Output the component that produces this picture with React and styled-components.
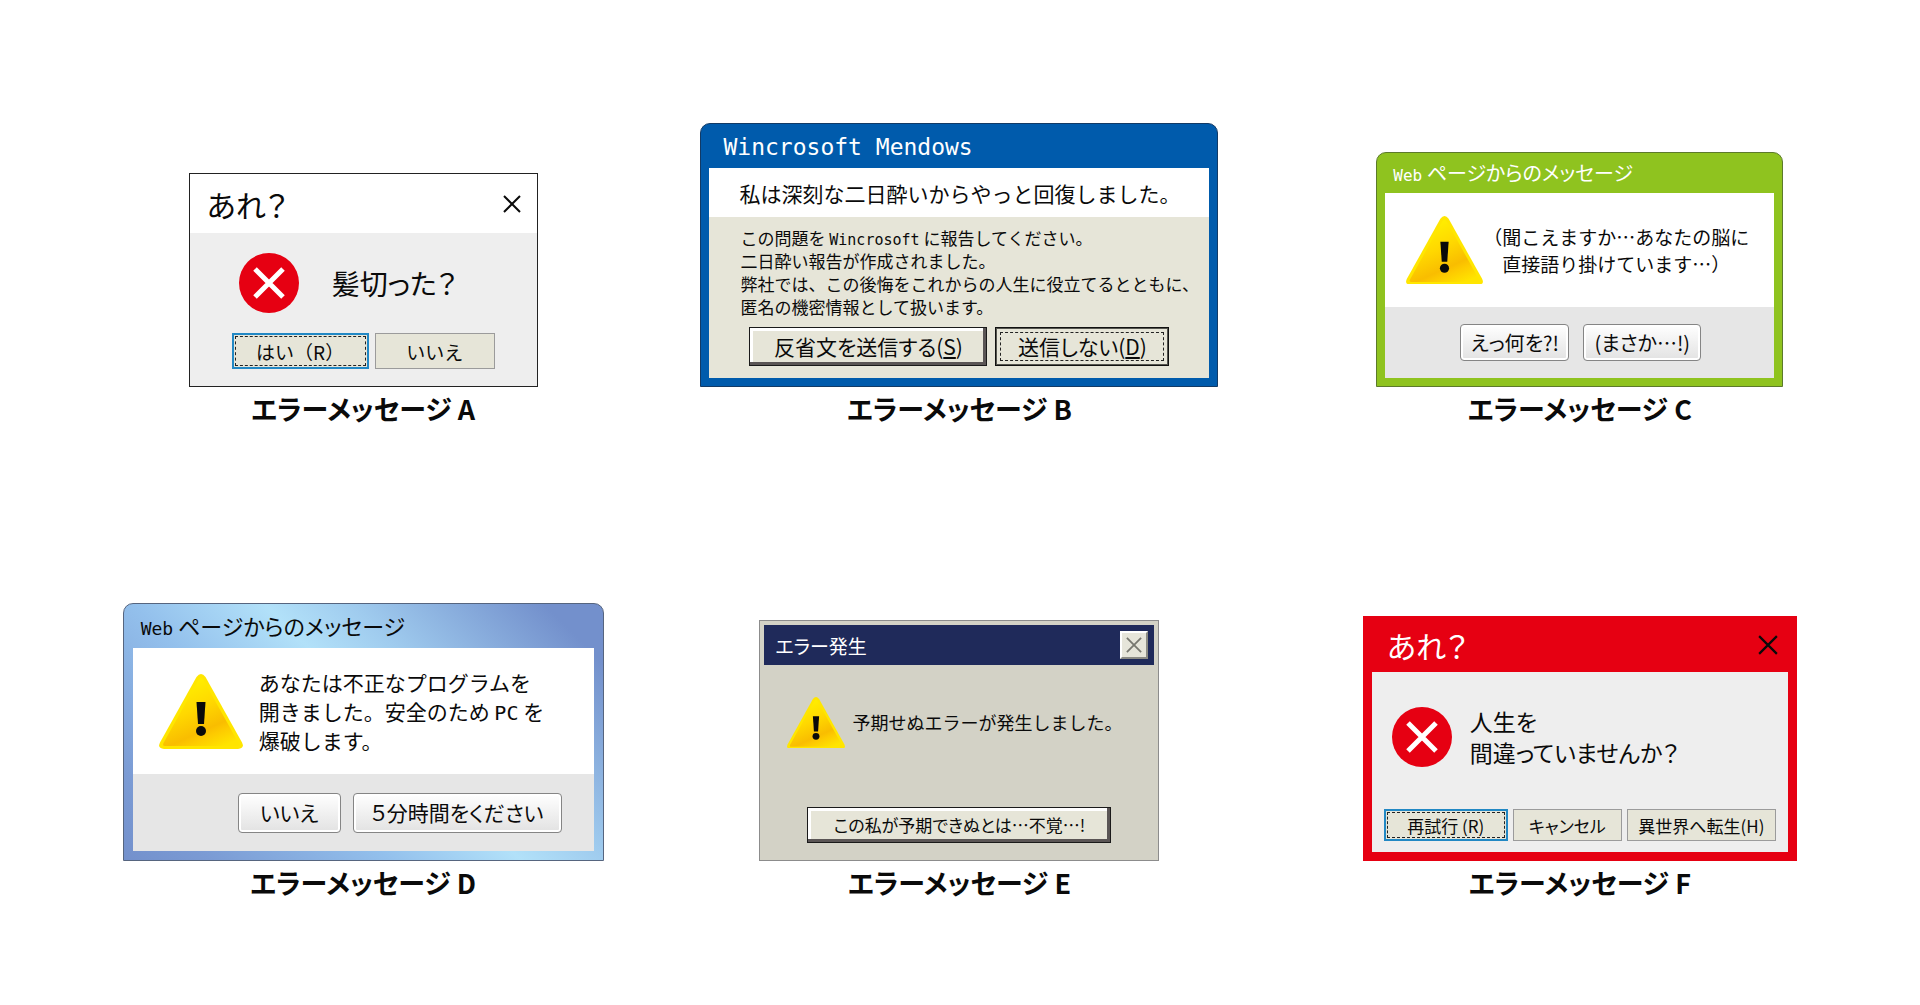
import React from "react";
import styled, { createGlobalStyle, css } from "styled-components";

const GlobalStyle = createGlobalStyle`
  *, *::before, *::after { box-sizing: border-box; }
  body { margin: 0; background: #fff; color: #0a0a0a; }
  body, button { font-family: "Noto Sans CJK JP", sans-serif; }
`;

const proportional = css`
  font-feature-settings: "palt";
`;

const Gallery = styled.main`
  display: grid;
  grid-template-columns: 149fr 149fr 161fr;
  align-items: end;
  justify-items: center;
  row-gap: 172px;
  padding: 123px 18px 0 65px;
`;

const Figure = styled.figure`
  margin: 0;
  display: flex;
  flex-direction: column;
  align-items: center;
`;

const Caption = styled.figcaption`
  font-size: 27px;
  font-weight: 700;
  line-height: 44px;
  ${proportional}
`;

const Dialog = styled.section`
  width: ${(p) => p.$width}px;
  border: 1px solid ${(p) => p.$edge};
  border-radius: ${(p) => (p.$round ? "10px 10px 0 0" : "0")};
  background: ${(p) => p.$frame};
  padding: 0 ${(p) => p.$rim ?? 0}px ${(p) => p.$rim ?? 0}px;
`;

const TitleBar = styled.header`
  display: flex;
  align-items: center;
  justify-content: space-between;
  height: ${(p) => p.$height}px;
  padding: 0 ${(p) => p.$padRight ?? 16}px 0 ${(p) => p.$padLeft}px;
  background: ${(p) => p.$bg ?? "transparent"};
  color: ${(p) => p.$color ?? "inherit"};
`;

const Title = styled.h2`
  margin: 0;
  font-size: ${(p) => p.$size}px;
  font-weight: 400;
  line-height: 1;
  ${proportional}
`;

const Mono = styled.span`
  font-family: "DejaVu Sans Mono", monospace;
  font-size: ${(p) => p.$size}px;
  line-height: 1;
`;

const CloseButton = styled.button`
  display: flex;
  padding: 0;
  border: 0;
  background: none;
  color: #0a0a0a;
`;

const BevelClose = styled(CloseButton)`
  width: 28px;
  height: 28px;
  align-items: center;
  justify-content: center;
  background: #e6e5da;
  border: 2px solid;
  border-color: #fff #8b8b84 #8b8b84 #fff;
  color: #77776f;
`;

const Panel = styled.div`
  height: ${(p) => p.$height}px;
  background: ${(p) => p.$bg ?? "transparent"};
  display: flex;
  align-items: center;
  gap: ${(p) => p.$gap ?? 0}px;
  padding: ${(p) => p.$pad ?? "0"};
`;

const Stack = styled.div`
  background: ${(p) => p.$bg};
  padding: ${(p) => p.$pad ?? "0"};
`;

const Message = styled.p`
  margin: 0;
  font-size: ${(p) => p.$size}px;
  line-height: ${(p) => p.$line}px;
  white-space: nowrap;
  ${(p) => p.$tight && proportional}
`;

const Indent = styled.span`
  padding-left: 1em;
`;

const Actions = styled.div`
  display: flex;
  align-items: center;
  justify-content: ${(p) => p.$justify ?? "flex-start"};
  gap: ${(p) => p.$gap}px;
  height: ${(p) => p.$height}px;
  padding: ${(p) => p.$pad ?? "0"};
  background: ${(p) => p.$bg ?? "transparent"};
`;

const BaseButton = styled.button`
  display: flex;
  align-items: center;
  justify-content: center;
  width: ${(p) => p.$width}px;
  height: ${(p) => p.$height}px;
  padding: 0;
  font-size: ${(p) => p.$size}px;
  line-height: 1;
  white-space: nowrap;
  color: #0a0a0a;
  ${(p) => !p.$loose && proportional}
`;

const FlatButton = styled(BaseButton)`
  background: #e6e5d8;
  border: 1px solid #9b9b9b;
  ${(p) =>
    p.$focused &&
    css`
      border: 2px solid #2288c4;
      outline: 1px dashed #222;
      outline-offset: -4px;
    `}
`;

const BevelButton = styled(BaseButton)`
  background: #e6e5d8;
  border: 1px solid #1a1a1a;
  box-shadow: inset -3px -3px 0 #5a5555, inset 3px 3px 0 #fff;
`;

const PressedButton = styled(BaseButton)`
  background: #e6e5d8;
  border: 1px solid #111;
  box-shadow: inset 0 0 0 1px #55554f;
  outline: 1px dashed #222;
  outline-offset: -6px;
`;

const GlossButton = styled(BaseButton)`
  border: 1px solid #858585;
  border-radius: 4px;
  background: linear-gradient(#fff, #e2e2e2);
  box-shadow: inset 0 0 0 2px #fff;
`;

function WarningIcon({ width, id }) {
  return (
    <svg width={width} viewBox="0 0 84 75" role="img" aria-label="警告">
      <defs>
        <linearGradient id={id} x1="0.35" y1="0.1" x2="0.8" y2="1">
          <stop offset="0" stopColor="#ffec00" />
          <stop offset="0.35" stopColor="#ffd800" />
          <stop offset="0.68" stopColor="#f9bd00" />
          <stop offset="0.78" stopColor="#fdca00" />
          <stop offset="1" stopColor="#ffe400" />
        </linearGradient>
      </defs>
      <path
        d="M37.500 3Q42-3 46.500 3L83 68.500Q86 74.500 79 75H5Q-2 74.500 1 68.500Z"
        fill="#ffe600"
      />
      <path d="M39.500 6Q42 2 44.500 6L79.500 69Q81 72 78 72H6Q3 72 4.500 69Z" fill={`url(#${id})`} />
      <path d="M37.500 28H46.500L45 50H39Z" fill="#0a0a0a" />
      <circle cx="42" cy="57" r="5" fill="#0a0a0a" />
    </svg>
  );
}

function ErrorIcon() {
  return (
    <svg width="60" height="60" viewBox="0 0 60 60" role="img" aria-label="エラー">
      <circle cx="30" cy="30" r="30" fill="#e60012" />
      <path d="M16 16L44 44M44 16L16 44" stroke="#fff" strokeWidth="5" />
    </svg>
  );
}

function CrossIcon({ size, weight }) {
  return (
    <svg width={size} height={size} viewBox="0 0 18 18" aria-hidden="true">
      <path d="M1 1L17 17M17 1L1 17" stroke="currentColor" strokeWidth={weight} />
    </svg>
  );
}

function DialogA() {
  return (
    <Dialog $width={349} $edge="#222" $frame="#eee">
      <TitleBar $height={59} $padLeft={17} $bg="#fff">
        <Title $size={30}>あれ？</Title>
        <CloseButton aria-label="閉じる">
          <CrossIcon size={18} weight={2} />
        </CloseButton>
      </TitleBar>
      <Panel $height={100} $pad="0 0 0 49px" $gap={33}>
        <ErrorIcon />
        <Message $size={28} $line={32} $tight>髪切った？</Message>
      </Panel>
      <Actions $height={53} $gap={6} $pad="0 0 17px 42px">
        <FlatButton $width={137} $height={36} $size={19} $focused $loose>はい（R）</FlatButton>
        <FlatButton $width={120} $height={36} $size={19} $loose>いいえ</FlatButton>
      </Actions>
    </Dialog>
  );
}

function DialogB() {
  return (
    <Dialog $width={518} $edge="#123a66" $frame="#005bac" $rim={8} $round>
      <TitleBar $height={44} $padLeft={14} $color="#fff">
        <Title $size={23}>
          <Mono $size={23}>Wincrosoft Mendows</Mono>
        </Title>
      </TitleBar>
      <Panel $height={49} $bg="#fff" $pad="0 0 0 30px">
        <Message $size={21} $line={32}>私は深刻な二日酔いからやっと回復しました。</Message>
      </Panel>
      <Stack $bg="#e6e5d8" $pad="9px 0 0 31px">
        <Message $size={17} $line={23}>
          この問題を <Mono $size={15}>Wincrosoft</Mono> に報告してください。<br />
          二日酔い報告が作成されました。<br />
          弊社では、この後悔をこれからの人生に役立てるとともに、<br />
          匿名の機密情報として扱います。
        </Message>
        <Actions $height={60} $gap={8} $pad="0 0 4px 9px">
          <BevelButton $width={238} $height={39} $size={21}>
            反省文を送信する(<u>S</u>)
          </BevelButton>
          <PressedButton $width={174} $height={39} $size={21}>
            送信しない(<u>D</u>)
          </PressedButton>
        </Actions>
      </Stack>
    </Dialog>
  );
}

function DialogC() {
  return (
    <Dialog $width={407} $edge="#5c7a2b" $frame="#8fc31f" $rim={8} $round>
      <TitleBar $height={40} $padLeft={8} $color="#fff">
        <Title $size={20}>
          <Mono $size={16}>Web</Mono> ページからのメッセージ
        </Title>
      </TitleBar>
      <Panel $height={114} $bg="#fff" $pad="0 0 0 21px">
        <WarningIcon width={77} id="warning-c" />
        <Message $size={19} $line={27}>
          （聞こえますか…あなたの脳に<br />
          <Indent>直接語り掛けています…）</Indent>
        </Message>
      </Panel>
      <Actions $height={71} $gap={14} $bg="#e6e6e6" $pad="0 0 0 75px">
        <GlossButton $width={109} $height={37} $size={20}>えっ何を?!</GlossButton>
        <GlossButton $width={118} $height={37} $size={20}>(まさか…!)</GlossButton>
      </Actions>
    </Dialog>
  );
}

const aero =
  "linear-gradient(45deg, #7390cc 0%, #7b9bd4 12%, #93c0ec 36%, #b2e1f9 54%, #9fcbee 66%, #7390cc 92%)";

function DialogD() {
  return (
    <Dialog $width={481} $edge="#56657f" $frame={aero} $rim={9} $round>
      <TitleBar $height={44} $padLeft={8}>
        <Title $size={22}>
          <Mono $size={18}>Web</Mono> ページからのメッセージ
        </Title>
      </TitleBar>
      <Panel $height={126} $bg="#fff" $pad="0 0 0 26px" $gap={16}>
        <WarningIcon width={84} id="warning-d" />
        <Message $size={21} $line={29}>
          あなたは不正なプログラムを<br />
          開きました。安全のため <Mono $size={20}>PC</Mono> を<br />
          爆破します。
        </Message>
      </Panel>
      <Actions $height={77} $gap={12} $bg="#e6e6e6" $justify="flex-end" $pad="0 32px 0 0">
        <GlossButton $width={103} $height={40} $size={21}>いいえ</GlossButton>
        <GlossButton $width={209} $height={40} $size={21}>５分時間をください</GlossButton>
      </Actions>
    </Dialog>
  );
}

function DialogE() {
  return (
    <Dialog $width={400} $edge="#8c8c8c" $frame="#d3d2c6" $rim={4}>
      <Stack $pad="4px 0 0">
        <TitleBar $height={40} $padLeft={11} $padRight={6} $bg="#1f2a5a" $color="#fff">
          <Title $size={19}>エラー発生</Title>
          <BevelClose aria-label="閉じる">
            <CrossIcon size={16} weight={2} />
          </BevelClose>
        </TitleBar>
      </Stack>
      <Panel $height={115} $pad="0 0 0 23px" $gap={7}>
        <WarningIcon width={58} id="warning-e" />
        <Message $size={18} $line={27}>予期せぬエラーが発生しました。</Message>
      </Panel>
      <Actions $height={76} $justify="center" $pad="13px 0 0">
        <BevelButton $width={304} $height={36} $size={17}>
          この私が予期できぬとは…不覚…!
        </BevelButton>
      </Actions>
    </Dialog>
  );
}

function DialogF() {
  return (
    <Dialog $width={434} $edge="#e60012" $frame="#e60012" $rim={8}>
      <TitleBar $height={55} $padLeft={15} $padRight={10} $color="#fff">
        <Title $size={30}>あれ？</Title>
        <CloseButton aria-label="閉じる">
          <CrossIcon size={20} weight={2} />
        </CloseButton>
      </TitleBar>
      <Stack $bg="#eee">
        <Panel $height={130} $pad="0 0 0 20px" $gap={18}>
          <ErrorIcon />
          <Message $size={23} $line={31} $tight>
            人生を<br />
            間違っていませんか？
          </Message>
        </Panel>
        <Actions $height={50} $gap={5} $pad="0 12px 4px">
          <FlatButton $width={124} $height={32} $size={17} $focused>再試行 (R)</FlatButton>
          <FlatButton $width={109} $height={32} $size={17}>キャンセル</FlatButton>
          <FlatButton $width={149} $height={32} $size={17}>異世界へ転生(H)</FlatButton>
        </Actions>
      </Stack>
    </Dialog>
  );
}

const samples = [
  ["A", DialogA],
  ["B", DialogB],
  ["C", DialogC],
  ["D", DialogD],
  ["E", DialogE],
  ["F", DialogF],
];

export default function App() {
  return (
    <>
      <GlobalStyle />
      <Gallery>
        {samples.map(([name, Sample]) => (
          <Figure key={name}>
            <Sample />
            <Caption>エラーメッセージ {name}</Caption>
          </Figure>
        ))}
      </Gallery>
    </>
  );
}
